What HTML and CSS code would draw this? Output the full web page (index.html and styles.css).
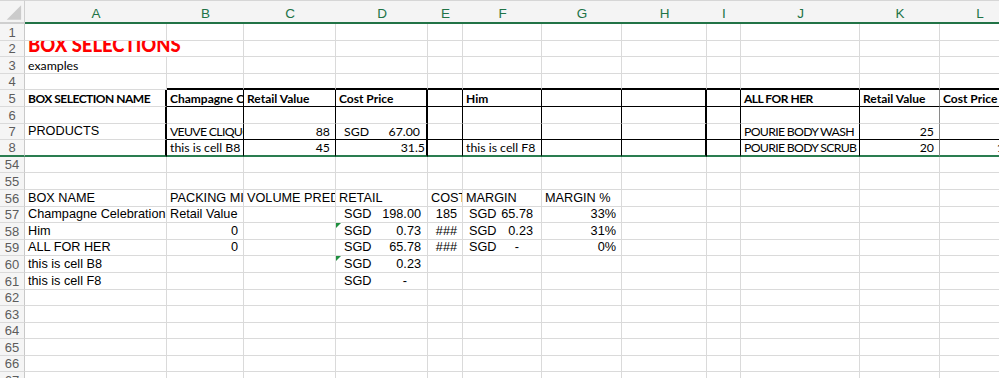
FILE: index.html
```html
<!DOCTYPE html>
<html lang="en">
<head>
    <meta charset="UTF-8">
    <meta name="viewport" content="width=device-width, initial-scale=1.0">
    <title>Box Selections</title>
    <link rel="stylesheet" href="styles.css">
</head>
<body>
<div class="sheet">
    <!-- column letters -->
    <div class="row heads">
        <div class="corner">
            <svg width="25" height="21" viewBox="0 0 25 21"><polygon points="7,19 22,19 22,4" fill="#cbcbcb"/></svg>
        </div>
        <div>A</div><div>B</div><div>C</div><div>D</div><div>E</div><div>F</div>
        <div>G</div><div>H</div><div>I</div><div>J</div><div>K</div><div>L</div>
    </div>

    <!-- top block: rows 1 - 8 -->
    <div class="row cal">
        <div class="num">1</div>
        <div></div><div></div><div></div><div></div><div></div><div></div>
        <div></div><div></div><div></div><div></div><div></div><div></div>
    </div>
    <div class="row cal">
        <div class="num">2</div>
        <div class="title"><span>BOX SELECTIONS</span></div>
        <div></div><div></div><div></div><div></div><div></div>
        <div></div><div></div><div></div><div></div><div></div>
    </div>
    <div class="row cal">
        <div class="num">3</div>
        <div>examples</div><div></div><div></div><div></div><div></div><div></div>
        <div></div><div></div><div></div><div></div><div></div><div></div>
    </div>
    <div class="row cal box-top">
        <div class="num">4</div>
        <div></div><div></div><div></div><div></div><div></div><div></div>
        <div></div><div></div><div></div><div></div><div></div><div></div>
    </div>
    <div class="row cal box ruled heading">
        <div class="num">5</div>
        <div class="caps">BOX SELECTION NAME</div>
        <div>Champagne Celebration</div>
        <div>Retail Value</div>
        <div>Cost Price</div>
        <div></div>
        <div>Him</div>
        <div></div><div></div><div></div>
        <div class="caps">ALL FOR HER</div>
        <div>Retail Value</div>
        <div>Cost Price</div>
    </div>
    <div class="row cal box">
        <div class="num">6</div>
        <div></div><div></div><div></div><div></div><div></div><div></div>
        <div></div><div></div><div></div><div></div><div></div><div></div>
    </div>
    <div class="row cal box ruled">
        <div class="num">7</div>
        <div class="arial">PRODUCTS</div>
        <div class="caps">VEUVE CLIQUOT</div>
        <div class="r">88</div>
        <div class="acct"><span>SGD</span><span>67.00</span></div>
        <div></div><div></div><div></div><div></div><div></div>
        <div class="caps">POURIE BODY WASH</div>
        <div class="r">25</div>
        <div></div>
    </div>
    <div class="row cal box freeze">
        <div class="num">8</div>
        <div></div>
        <div>this is cell B8</div>
        <div class="r">45</div>
        <div class="r tight">31.5</div>
        <div></div>
        <div>this is cell F8</div>
        <div></div><div></div><div></div>
        <div class="caps">POURIE BODY SCRUB</div>
        <div class="r">20</div>
        <div class="r">1.5</div>
    </div>

    <!-- summary block: rows 54 onwards -->
    <div class="row">
        <div class="num">54</div>
        <div></div><div></div><div></div><div></div><div></div><div></div>
        <div></div><div></div><div></div><div></div><div></div><div></div>
    </div>
    <div class="row">
        <div class="num">55</div>
        <div></div><div></div><div></div><div></div><div></div><div></div>
        <div></div><div></div><div></div><div></div><div></div><div></div>
    </div>
    <div class="row">
        <div class="num">56</div>
        <div>BOX NAME</div>
        <div>PACKING MIX</div>
        <div>VOLUME PREDICTION</div>
        <div>RETAIL</div>
        <div>COST</div>
        <div>MARGIN</div>
        <div>MARGIN %</div>
        <div></div><div></div><div></div><div></div><div></div>
    </div>
    <div class="row">
        <div class="num">57</div>
        <div>Champagne Celebration</div>
        <div>Retail Value</div>
        <div></div>
        <div class="acct"><span>SGD</span><span>198.00</span></div>
        <div class="r">185</div>
        <div class="acct wide"><span>SGD</span><span>65.78</span></div>
        <div class="r">33%</div>
        <div></div><div></div><div></div><div></div><div></div>
    </div>
    <div class="row">
        <div class="num">58</div>
        <div>Him</div>
        <div class="r">0</div>
        <div></div>
        <div class="acct flag"><span>SGD</span><span>0.73</span></div>
        <div class="r">###</div>
        <div class="acct wide"><span>SGD</span><span>0.23</span></div>
        <div class="r">31%</div>
        <div></div><div></div><div></div><div></div><div></div>
    </div>
    <div class="row">
        <div class="num">59</div>
        <div>ALL FOR HER</div>
        <div class="r">0</div>
        <div></div>
        <div class="acct"><span>SGD</span><span>65.78</span></div>
        <div class="r">###</div>
        <div class="acct wide"><span>SGD</span><span class="dash">-</span></div>
        <div class="r">0%</div>
        <div></div><div></div><div></div><div></div><div></div>
    </div>
    <div class="row">
        <div class="num">60</div>
        <div>this is cell B8</div>
        <div></div><div></div>
        <div class="acct flag"><span>SGD</span><span>0.23</span></div>
        <div></div><div></div><div></div><div></div><div></div><div></div><div></div><div></div>
    </div>
    <div class="row">
        <div class="num">61</div>
        <div>this is cell F8</div>
        <div></div><div></div>
        <div class="acct"><span>SGD</span><span class="dash">-</span></div>
        <div></div><div></div><div></div><div></div><div></div><div></div><div></div><div></div>
    </div>
    <div class="row">
        <div class="num">62</div>
        <div></div><div></div><div></div><div></div><div></div><div></div>
        <div></div><div></div><div></div><div></div><div></div><div></div>
    </div>
    <div class="row">
        <div class="num">63</div>
        <div></div><div></div><div></div><div></div><div></div><div></div>
        <div></div><div></div><div></div><div></div><div></div><div></div>
    </div>
    <div class="row">
        <div class="num">64</div>
        <div></div><div></div><div></div><div></div><div></div><div></div>
        <div></div><div></div><div></div><div></div><div></div><div></div>
    </div>
    <div class="row">
        <div class="num">65</div>
        <div></div><div></div><div></div><div></div><div></div><div></div>
        <div></div><div></div><div></div><div></div><div></div><div></div>
    </div>
    <div class="row">
        <div class="num">66</div>
        <div></div><div></div><div></div><div></div><div></div><div></div>
        <div></div><div></div><div></div><div></div><div></div><div></div>
    </div>
    <div class="row">
        <div class="num">67</div>
        <div></div><div></div><div></div><div></div><div></div><div></div>
        <div></div><div></div><div></div><div></div><div></div><div></div>
    </div>
</div>
</body>
</html>
```

FILE: styles.css
```css
/* Spreadsheet grid */
body {
    margin: 0;
    overflow: hidden;
    background-color: #fff;
}

.sheet {
    width: 1020px;
    font-family: "Liberation Sans", Arial, sans-serif;
    font-size: 12.7px;
    color: #000;
}

.row {
    display: grid;
    grid-template-columns: 25px 142px 77px 92px 92px 35px 79px 80px 85px 34px 119px 80px 80px;
    height: 16.6px;
}

.row > div {
    box-sizing: border-box;
    display: flex;
    align-items: flex-end;
    min-width: 0;
    overflow: hidden;
    white-space: nowrap;
    padding: 0 3px;
    line-height: 15px;
    border-right: 1px solid #dadada;
    border-bottom: 1px solid #dadada;
}

/* row numbers down the left */
.row > .num {
    justify-content: center;
    padding: 0;
    background-color: #f5f5f5;
    color: #5c5c5c;
    font-family: "Liberation Sans", Arial, sans-serif;
    font-size: 13px;
    font-weight: normal;
    letter-spacing: 0;
    border-right-color: #c9c9c9;
}

/* column letters */
.heads {
    height: 24px;
}
.heads > div {
    align-items: center;
    justify-content: center;
    padding: 4px 0 0;
    background-color: #f4f4f4;
    color: #217346;
    font-size: 13.5px;
    border-top: 1px solid #d6d6d6;
    border-right: none;
    border-bottom: 2px solid #217346;
}
.heads > .corner {
    padding: 0;
    align-items: flex-end;
    border-right: 1px solid #cfcfcf;
    border-bottom-color: #cfcfcf;
}

/* Calibri-looking block at the top */
.cal > div {
    font-family: Lato, "Open Sans", sans-serif;
    font-size: 12.3px;
}
.cal > .caps {
    letter-spacing: -0.7px;
}
.cal > .arial {
    font-family: "Liberation Sans", Arial, sans-serif;
    font-size: 12.7px;
}
.heading > div {
    font-size: 12px;
    font-weight: bold;
}
.heading > .caps {
    letter-spacing: -0.5px;
}

/* big red heading, sits low in its short row so the tops get cut */
.row > .title {
    grid-column: span 2;
    padding-left: 3px;
    line-height: normal;
    font-size: 20.5px;
    font-weight: 900;
    color: #f00;
}
.title span {
    transform: scaleX(0.9);
    transform-origin: left bottom;
}

/* boxed table borders */
.box-top > :nth-child(n+3) {
    border-bottom: 2px solid #000;
}
.ruled > :nth-child(n+3) {
    border-bottom-color: #000;
}
.box > :nth-child(2),
.box > :nth-child(5),
.box > :nth-child(9) {
    border-right: 2px solid #000;
}
.box > :nth-child(3),
.box > :nth-child(4),
.box > :nth-child(6),
.box > :nth-child(7),
.box > :nth-child(8),
.box > :nth-child(10),
.box > :nth-child(11) {
    border-right-color: #000;
}
.box > :nth-child(12) {
    border-right-color: #8a8a8a;
}

/* frozen panes divider */
.freeze > div {
    border-bottom: 2px solid #2a7d50;
}

/* number formats */
.row > .r {
    justify-content: flex-end;
    padding-right: 5px;
}
.row > .tight {
    padding-right: 1px;
}
.row > .acct {
    justify-content: space-between;
    padding: 0 6px 0 8px;
}
.row > .acct.wide {
    padding: 0 8px 0 6px;
}
.acct .dash {
    margin-right: 14px;
}

/* green error marker in the corner of a cell */
.flag {
    position: relative;
}
.flag::before {
    content: "";
    position: absolute;
    top: 0;
    left: 0;
    border-top: 5px solid #1f8f3f;
    border-right: 5px solid transparent;
}
```
